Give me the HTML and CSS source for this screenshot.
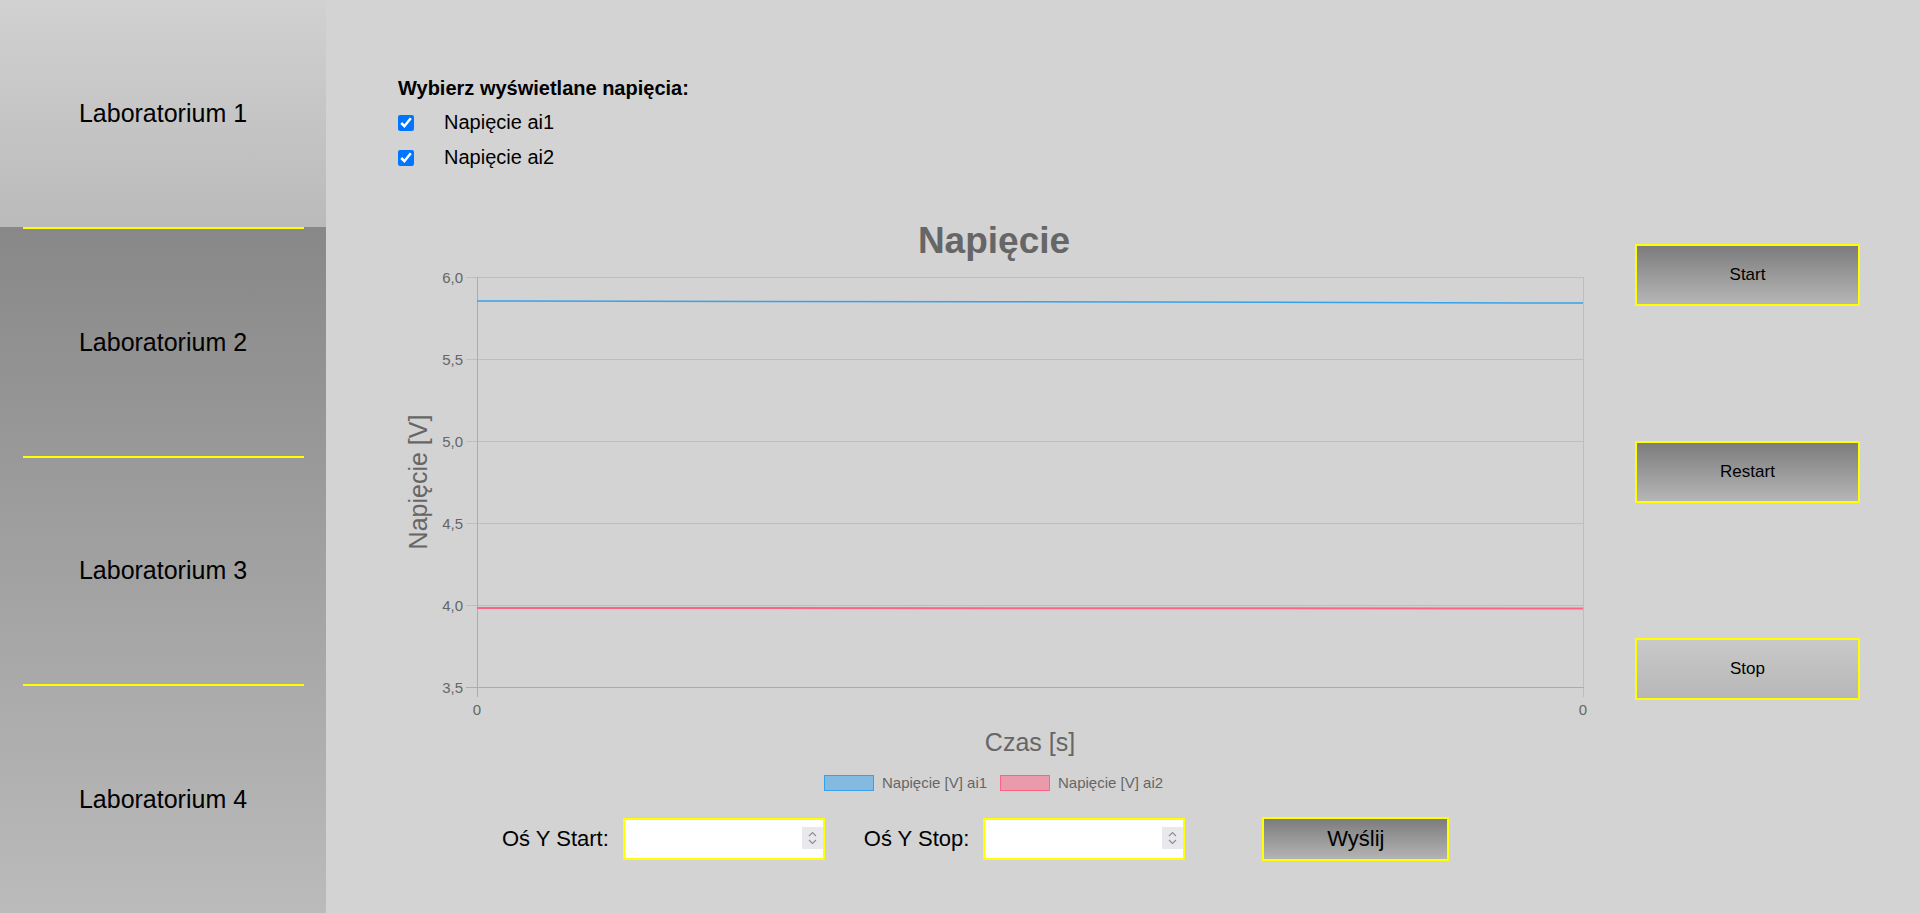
FILE: index.html
```html
<!DOCTYPE html>
<html lang="pl">
<head>
<meta charset="utf-8">
<title>Laboratorium 1</title>
<link rel="stylesheet" href="styles.css">
</head>
<body>
<div class="app">
  <nav class="sidebar">
    <a class="nav-item active" href="#">Laboratorium 1</a>
    <div class="nav-sep"></div>
    <a class="nav-item" href="#">Laboratorium 2</a>
    <div class="nav-sep"></div>
    <a class="nav-item" href="#">Laboratorium 3</a>
    <div class="nav-sep"></div>
    <a class="nav-item" href="#">Laboratorium 4</a>
  </nav>
  <main class="content">
    <section class="selector">
      <h3 class="selector-title">Wybierz wyświetlane napięcia:</h3>
      <div class="options">
        <label class="option"><input type="checkbox" checked><span>Napięcie ai1</span></label>
        <label class="option"><input type="checkbox" checked><span>Napięcie ai2</span></label>
      </div>
    </section>
    <section class="chart-row">
      <svg class="chart" width="1192" height="602" viewBox="0 0 1192 602" xmlns="http://www.w3.org/2000/svg">
        <text class="chart-title" x="596" y="38" text-anchor="middle">Napięcie</text>
        <g class="grid">
          <line x1="68" y1="62.5" x2="1186" y2="62.5"/>
          <line x1="68" y1="144.5" x2="1186" y2="144.5"/>
          <line x1="68" y1="226.5" x2="1186" y2="226.5"/>
          <line x1="68" y1="308.5" x2="1186" y2="308.5"/>
          <line x1="68" y1="390.5" x2="1186" y2="390.5"/>
          <line x1="1185.5" y1="62" x2="1185.5" y2="482"/>
        </g>
        <g class="axis">
          <line x1="68" y1="472.5" x2="1186" y2="472.5"/>
          <line x1="79.5" y1="62" x2="79.5" y2="482"/>
        </g>
        <g class="tick">
          <text x="65" y="67.5" text-anchor="end">6,0</text>
          <text x="65" y="149.5" text-anchor="end">5,5</text>
          <text x="65" y="231.5" text-anchor="end">5,0</text>
          <text x="65" y="313.5" text-anchor="end">4,5</text>
          <text x="65" y="395.5" text-anchor="end">4,0</text>
          <text x="65" y="477.5" text-anchor="end">3,5</text>
          <text x="79" y="500" text-anchor="middle">0</text>
          <text x="1185" y="500" text-anchor="middle">0</text>
        </g>
        <text class="axis-title" x="632" y="536" text-anchor="middle">Czas [s]</text>
        <text class="axis-title" transform="translate(29 267) rotate(-90)" text-anchor="middle">Napięcie [V]</text>
        <polyline class="series-1" points="79,86 600,86.8 1185,88"/>
        <polyline class="series-2" points="79,393 600,393.2 1185,393.5"/>
        <g class="legend">
          <rect class="legend-1" x="426.5" y="560.5" width="49" height="15"/>
          <text x="484" y="573">Napięcie [V] ai1</text>
          <rect class="legend-2" x="602.5" y="560.5" width="49" height="15"/>
          <text x="660" y="573">Napięcie [V] ai2</text>
        </g>
      </svg>
      <div class="controls">
        <button class="btn" type="button">Start</button>
        <button class="btn" type="button">Restart</button>
        <button class="btn btn-light" type="button">Stop</button>
      </div>
    </section>
    <form class="axis-form">
      <label class="field-label first">Oś Y Start:</label>
      <span class="num">
        <input class="num-input" type="text">
        <span class="spinner"><svg width="21" height="22" viewBox="0 0 21 22"><path d="M7 9 L10.5 5.5 L14 9" /><path d="M7 13 L10.5 16.5 L14 13" /></svg></span>
      </span>
      <label class="field-label second">Oś Y Stop:</label>
      <span class="num">
        <input class="num-input" type="text">
        <span class="spinner"><svg width="21" height="22" viewBox="0 0 21 22"><path d="M7 9 L10.5 5.5 L14 9" /><path d="M7 13 L10.5 16.5 L14 13" /></svg></span>
      </span>
      <button class="btn send" type="button">Wyślij</button>
    </form>
  </main>
</div>
</body>
</html>
```
FILE: styles.css
```css
* { box-sizing: border-box; }
html, body {
  margin: 0;
  padding: 0;
  height: 100%;
  overflow: hidden;
}
body {
  font-family: "Liberation Sans", Arial, sans-serif;
  background: #d3d3d3;
  color: #000;
}
.app {
  display: flex;
  height: 913px;
}
.sidebar {
  width: 326px;
  flex: 0 0 326px;
  display: flex;
  flex-direction: column;
  background: linear-gradient(#777777, #bbbbbb);
}
.nav-item {
  flex: 1;
  display: flex;
  align-items: center;
  justify-content: center;
  font-size: 25px;
  color: #000;
  text-decoration: none;
}
.nav-item.active {
  background: linear-gradient(#d1d1d1, #bababa);
}
.nav-sep {
  height: 2px;
  margin: 0 22px 0 23px;
  background: #ffff00;
}
.content {
  flex: 1;
  background: #d3d3d3;
  padding: 77px 0 0 72px;
}
.selector-title {
  margin: 0;
  font-size: 20px;
  line-height: 23px;
  font-weight: bold;
}
.options {
  display: flex;
  flex-direction: column;
  gap: 12px;
  margin-top: 11px;
}
.option {
  display: flex;
  align-items: center;
  height: 23px;
  font-size: 20px;
  line-height: 23px;
}
.option input {
  width: 16px;
  height: 16px;
  margin: 0;
  accent-color: #0075ff;
}
.option span {
  margin-left: 30px;
}
.chart-row {
  display: flex;
  margin-top: 46px;
  height: 602px;
}
.chart {
  display: block;
  flex: 0 0 1192px;
  font-family: "Liberation Sans", Arial, sans-serif;
}
.chart-title {
  font-size: 37px;
  font-weight: bold;
  fill: #666666;
}
.grid line {
  stroke: #bebebe;
  stroke-width: 1;
}
.axis line {
  stroke: #acacac;
  stroke-width: 1;
}
.tick text {
  font-size: 15px;
  fill: #666666;
}
.axis-title {
  font-size: 25px;
  fill: #666666;
}
.series-1 {
  fill: none;
  stroke: rgb(54, 162, 235);
  stroke-width: 1.5;
}
.series-2 {
  fill: none;
  stroke: rgb(255, 99, 132);
  stroke-width: 2;
}
.legend text {
  font-size: 15px;
  fill: #666666;
}
.legend-1 {
  fill: rgba(54, 162, 235, 0.5);
  stroke: rgb(54, 162, 235);
  stroke-width: 1;
}
.legend-2 {
  fill: rgba(255, 99, 132, 0.5);
  stroke: rgb(255, 99, 132);
  stroke-width: 1;
}
.controls {
  display: flex;
  flex-direction: column;
  gap: 135px;
  padding-top: 29px;
  margin-left: 45px;
}
.btn {
  width: 225px;
  height: 62px;
  border: 2px solid #ffff00;
  background: linear-gradient(#7c7c7c, #b6b6b6);
  font-family: "Liberation Sans", Arial, sans-serif;
  font-size: 17px;
  color: #000;
  padding: 0;
  margin: 0;
}
.btn-light {
  background: linear-gradient(#c9c9c9, #b7b7b7);
}
.axis-form {
  display: flex;
  align-items: center;
  height: 44px;
  margin: 0;
  padding-left: 104px;
}
.field-label {
  font-size: 22px;
  margin-right: 14px;
}
.field-label.second {
  margin-left: 39px;
}
.num {
  position: relative;
  display: block;
  width: 202px;
  height: 42px;
}
.num-input {
  width: 202px;
  height: 42px;
  border: 2px solid #ffff00;
  background: #ffffff;
  margin: 0;
  padding: 0 28px 0 6px;
  font-size: 18px;
  font-family: "Liberation Sans", Arial, sans-serif;
  outline: none;
}
.spinner {
  position: absolute;
  right: 2px;
  top: 9px;
  width: 21px;
  height: 22px;
  background: #e9e9ed;
}
.spinner svg {
  display: block;
}
.spinner path {
  fill: none;
  stroke: #8d8d8d;
  stroke-width: 1.1;
}
.btn.send {
  width: 187px;
  height: 44px;
  margin-left: 77px;
  font-size: 22px;
  background: linear-gradient(#7c7c7c, #b4b4b4);
}
```
